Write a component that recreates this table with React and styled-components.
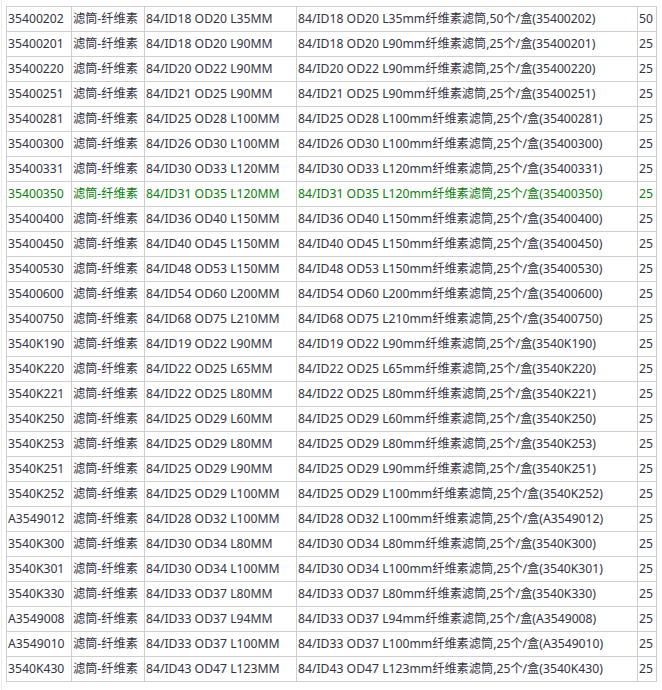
import React from 'react'
import styled, { createGlobalStyle } from 'styled-components'

const rows = [
  ['35400202', '84/ID18 OD20 L35MM', '84/ID18 OD20 L35mm纤维素滤筒,50个/盒(35400202)', '50'],
  ['35400201', '84/ID18 OD20 L90MM', '84/ID18 OD20 L90mm纤维素滤筒,25个/盒(35400201)', '25'],
  ['35400220', '84/ID20 OD22 L90MM', '84/ID20 OD22 L90mm纤维素滤筒,25个/盒(35400220)', '25'],
  ['35400251', '84/ID21 OD25 L90MM', '84/ID21 OD25 L90mm纤维素滤筒,25个/盒(35400251)', '25'],
  ['35400281', '84/ID25 OD28 L100MM', '84/ID25 OD28 L100mm纤维素滤筒,25个/盒(35400281)', '25'],
  ['35400300', '84/ID26 OD30 L100MM', '84/ID26 OD30 L100mm纤维素滤筒,25个/盒(35400300)', '25'],
  ['35400331', '84/ID30 OD33 L120MM', '84/ID30 OD33 L120mm纤维素滤筒,25个/盒(35400331)', '25'],
  ['35400350', '84/ID31 OD35 L120MM', '84/ID31 OD35 L120mm纤维素滤筒,25个/盒(35400350)', '25', true],
  ['35400400', '84/ID36 OD40 L150MM', '84/ID36 OD40 L150mm纤维素滤筒,25个/盒(35400400)', '25'],
  ['35400450', '84/ID40 OD45 L150MM', '84/ID40 OD45 L150mm纤维素滤筒,25个/盒(35400450)', '25'],
  ['35400530', '84/ID48 OD53 L150MM', '84/ID48 OD53 L150mm纤维素滤筒,25个/盒(35400530)', '25'],
  ['35400600', '84/ID54 OD60 L200MM', '84/ID54 OD60 L200mm纤维素滤筒,25个/盒(35400600)', '25'],
  ['35400750', '84/ID68 OD75 L210MM', '84/ID68 OD75 L210mm纤维素滤筒,25个/盒(35400750)', '25'],
  ['3540K190', '84/ID19 OD22 L90MM', '84/ID19 OD22 L90mm纤维素滤筒,25个/盒(3540K190)', '25'],
  ['3540K220', '84/ID22 OD25 L65MM', '84/ID22 OD25 L65mm纤维素滤筒,25个/盒(3540K220)', '25'],
  ['3540K221', '84/ID22 OD25 L80MM', '84/ID22 OD25 L80mm纤维素滤筒,25个/盒(3540K221)', '25'],
  ['3540K250', '84/ID25 OD29 L60MM', '84/ID25 OD29 L60mm纤维素滤筒,25个/盒(3540K250)', '25'],
  ['3540K253', '84/ID25 OD29 L80MM', '84/ID25 OD29 L80mm纤维素滤筒,25个/盒(3540K253)', '25'],
  ['3540K251', '84/ID25 OD29 L90MM', '84/ID25 OD29 L90mm纤维素滤筒,25个/盒(3540K251)', '25'],
  ['3540K252', '84/ID25 OD29 L100MM', '84/ID25 OD29 L100mm纤维素滤筒,25个/盒(3540K252)', '25'],
  ['A3549012', '84/ID28 OD32 L100MM', '84/ID28 OD32 L100mm纤维素滤筒,25个/盒(A3549012)', '25'],
  ['3540K300', '84/ID30 OD34 L80MM', '84/ID30 OD34 L80mm纤维素滤筒,25个/盒(3540K300)', '25'],
  ['3540K301', '84/ID30 OD34 L100MM', '84/ID30 OD34 L100mm纤维素滤筒,25个/盒(3540K301)', '25'],
  ['3540K330', '84/ID33 OD37 L80MM', '84/ID33 OD37 L80mm纤维素滤筒,25个/盒(3540K330)', '25'],
  ['A3549008', '84/ID33 OD37 L94MM', '84/ID33 OD37 L94mm纤维素滤筒,25个/盒(A3549008)', '25'],
  ['A3549010', '84/ID33 OD37 L100MM', '84/ID33 OD37 L100mm纤维素滤筒,25个/盒(A3549010)', '25'],
  ['3540K430', '84/ID43 OD47 L123MM', '84/ID43 OD47 L123mm纤维素滤筒,25个/盒(3540K430)', '25'],
]

const widths = [65, 73, 152, 341, 19]

const App = () => {
  return (
    <>
      <GlobalStyle />
      <Page>
        <Table>
          <colgroup>
            {widths.map((w, i) => (
              <Col key={i} $w={w} />
            ))}
          </colgroup>
          <tbody>
            {rows.map(([code, spec, desc, qty, hot]) => (
              <Row key={code} $hot={hot}>
                <Cell>{code}</Cell>
                <Cell>滤筒-纤维素</Cell>
                <Cell>{spec}</Cell>
                <Cell>{desc}</Cell>
                <Cell>{qty}</Cell>
              </Row>
            ))}
          </tbody>
        </Table>
      </Page>
    </>
  )
}

//Styled components
const GlobalStyle = createGlobalStyle`
  html, body {
    margin: 0;
    background: #fff;
  }
  body {
    font-family: "Noto Sans", "Noto Sans CJK SC", sans-serif;
  }
`

const Page = styled.div`
  margin-left: 1px;
  border-left: 1px solid #ececec;
  min-height: 690px;
  box-sizing: border-box;
  padding: 6px 0 0 4px;
`

const Table = styled.table`
  width: 650px;
  table-layout: fixed;
  border-collapse: collapse;
  border: 1px solid #cfcfcf;
`

const Col = styled.col`
  width: ${(p) => p.$w}px;
`

const Row = styled.tr`
  color: ${(p) => (p.$hot ? '#0a7f0a' : '#333344')};
`

const Cell = styled.td`
  height: 24px;
  padding: 0 0 0 1px;
  border: 1px solid #cfcfcf;
  font-size: 12.2px;
  line-height: 24px;
  white-space: nowrap;
  overflow: hidden;
  vertical-align: middle;
`

export default App
